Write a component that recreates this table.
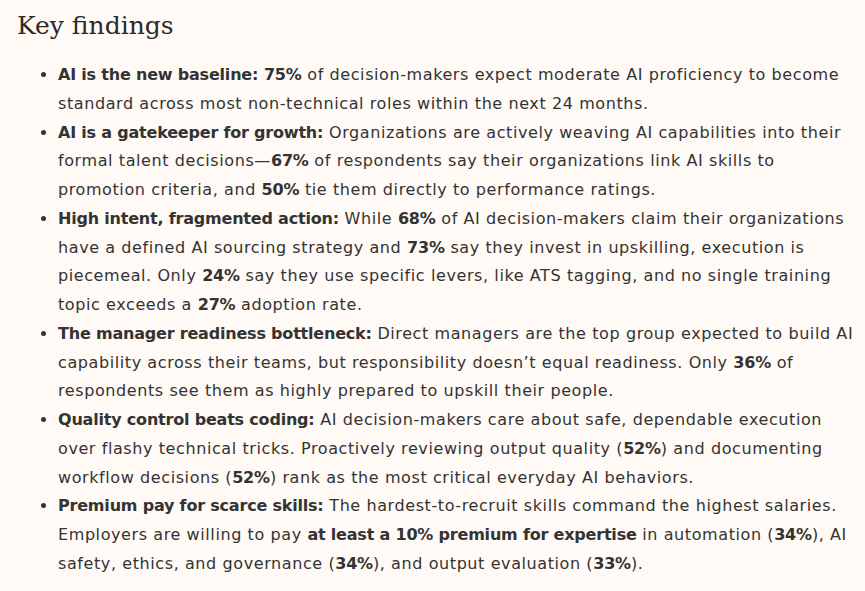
export default function App() {
  const B = ({ children }: { children: React.ReactNode }) => (
    <b className="font-bold tracking-[-0.2px]">{children}</b>
  )

  const findings = [
    {
      title: 'AI is the new baseline:',
      body: (
        <>
          {' '}<B>75%</B> of decision-makers expect moderate AI proficiency to become standard across most
          non-technical roles within the next 24 months.
        </>
      ),
    },
    {
      title: 'AI is a gatekeeper for growth:',
      body: (
        <>
          {' '}Organizations are actively weaving AI capabilities into their formal talent decisions—<B>67%</B> of
          respondents say their organizations link AI skills to promotion criteria, and <B>50%</B> tie them
          directly to performance ratings.
        </>
      ),
    },
    {
      title: 'High intent, fragmented action:',
      body: (
        <>
          {' '}While <B>68%</B> of AI decision-makers claim their organizations have a defined AI sourcing strategy
          and <B>73%</B> say they invest in upskilling, execution is piecemeal. Only <B>24%</B> say they use
          specific levers, like ATS tagging, and no single training topic exceeds a <B>27%</B> adoption rate.
        </>
      ),
    },
    {
      title: 'The manager readiness bottleneck:',
      body: (
        <>
          {' '}Direct managers are the top group expected to build AI capability across their teams, but
          responsibility doesn’t equal readiness. Only <B>36%</B> of respondents see them as highly prepared to
          upskill their people.
        </>
      ),
    },
    {
      title: 'Quality control beats coding:',
      body: (
        <>
          {' '}AI decision-makers care about safe, dependable execution over flashy technical tricks. Proactively
          reviewing output quality (<B>52%</B>) and documenting workflow decisions (<B>52%</B>) rank as the most
          critical everyday AI behaviors.
        </>
      ),
    },
    {
      title: 'Premium pay for scarce skills:',
      body: (
        <>
          {' '}The hardest-to-recruit skills command the highest salaries. Employers are willing to pay{' '}
          <B>at least a 10% premium for expertise</B> in automation (<B>34%</B>), AI safety, ethics, and
          governance (<B>34%</B>), and output evaluation (<B>33%</B>).
        </>
      ),
    },
  ]

  return (
    <div className="min-h-screen bg-[#fffaf5] text-[#333333] pl-[17px] pr-[4px] pt-[9px]">
      <h2 className="text-[25px] leading-[34px] text-[#2a2a2a] font-['DejaVu_Serif',serif]">Key findings</h2>
      <ul className="mt-[18px] pl-[41px] list-disc marker:text-[#333333] font-['DejaVu_Sans',sans-serif] text-[16px] leading-[28.75px] tracking-[0.59px]">
        {findings.map((f) => (
          <li key={f.title}>
            <B>{f.title}</B>
            {f.body}
          </li>
        ))}
      </ul>
    </div>
  )
}
